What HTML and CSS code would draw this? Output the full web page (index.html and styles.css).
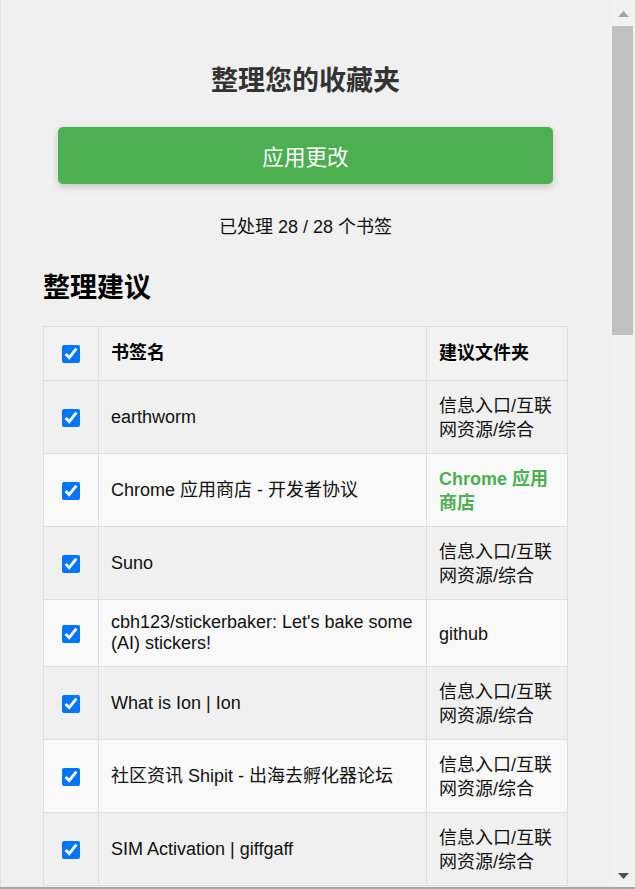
FILE: index.html
```html
<!DOCTYPE html>
<html lang="zh-CN">
<head>
<meta charset="utf-8">
<title>整理您的收藏夹</title>
<link rel="stylesheet" href="styles.css">
</head>
<body>
<div class="window">
  <main class="content">
    <h1 class="title">整理您的收藏夹</h1>
    <button class="apply-btn" type="button">应用更改</button>
    <p class="status">已处理 28 / 28 个书签</p>
    <h2 class="section-title">整理建议</h2>
    <table class="suggestions">
      <colgroup>
        <col class="col-check">
        <col class="col-name">
        <col class="col-folder">
      </colgroup>
      <thead>
        <tr>
          <th class="cell-check"><input type="checkbox" class="check" checked></th>
          <th>书签名</th>
          <th>建议文件夹</th>
        </tr>
      </thead>
      <tbody>
        <tr>
          <td class="cell-check"><input type="checkbox" class="check" checked></td>
          <td class="name">earthworm</td>
          <td class="folder">信息入口/互联网资源/综合</td>
        </tr>
        <tr>
          <td class="cell-check"><input type="checkbox" class="check" checked></td>
          <td class="name">Chrome 应用商店 - 开发者协议</td>
          <td class="folder folder-new">Chrome 应用商店</td>
        </tr>
        <tr>
          <td class="cell-check"><input type="checkbox" class="check" checked></td>
          <td class="name">Suno</td>
          <td class="folder">信息入口/互联网资源/综合</td>
        </tr>
        <tr>
          <td class="cell-check"><input type="checkbox" class="check" checked></td>
          <td class="name">cbh123/stickerbaker: Let's bake some (AI) stickers!</td>
          <td class="folder">github</td>
        </tr>
        <tr>
          <td class="cell-check"><input type="checkbox" class="check" checked></td>
          <td class="name">What is Ion | Ion</td>
          <td class="folder">信息入口/互联网资源/综合</td>
        </tr>
        <tr>
          <td class="cell-check"><input type="checkbox" class="check" checked></td>
          <td class="name">社区资讯 Shipit - 出海去孵化器论坛</td>
          <td class="folder">信息入口/互联网资源/综合</td>
        </tr>
        <tr>
          <td class="cell-check"><input type="checkbox" class="check" checked></td>
          <td class="name">SIM Activation | giffgaff</td>
          <td class="folder">信息入口/互联网资源/综合</td>
        </tr>
      </tbody>
    </table>
  </main>
  <aside class="scrollbar" aria-hidden="true">
    <div class="sb-btn sb-up">
      <svg width="11" height="6" viewBox="0 0 11 6"><polygon points="5.5,0 11,6 0,6" fill="#a3a3a3"/></svg>
    </div>
    <div class="sb-track"><div class="sb-thumb"></div></div>
    <div class="sb-btn sb-down">
      <svg width="11" height="6" viewBox="0 0 11 6"><polygon points="0,0 11,0 5.5,6" fill="#505050"/></svg>
    </div>
  </aside>
</div>
<div class="bottom-bar"></div>
</body>
</html>
```

FILE: styles.css
```css
html, body {
  margin: 0;
  padding: 0;
}

body {
  height: 889px;
  overflow: hidden;
  display: flex;
  flex-direction: column;
  background: #f0f0f0;
  font-family: "Liberation Sans", "Noto Sans CJK SC", Arial, sans-serif;
  font-size: 18px;
  color: #222;
}

.window {
  height: 887px;
  display: flex;
  border-left: 1px solid #e2e2e2;
}

.content {
  flex: 1;
  min-width: 0;
  overflow: hidden;
  padding: 63px 42px 0 42px;
}

.title {
  margin: 0;
  font-size: 27px;
  line-height: 36px;
  font-weight: bold;
  color: #333;
  text-align: center;
}

.apply-btn {
  display: flex;
  align-items: center;
  justify-content: center;
  width: calc(100% - 30px);
  height: 57px;
  margin: 28px 15px 0 15px;
  padding: 0;
  border: none;
  border-radius: 5px;
  background: #4caf50;
  color: #fff;
  font-family: inherit;
  font-size: 21.6px;
  box-shadow: 0 3px 7px rgba(0, 0, 0, 0.18);
}

.status {
  margin: 31px 0 0 0;
  line-height: 24px;
  text-align: center;
  color: #111;
}

.section-title {
  margin: 31px 0 0 0;
  font-size: 27px;
  line-height: 36px;
  font-weight: bold;
  color: #000;
}

.suggestions {
  margin-top: 20px;
  width: 100%;
  table-layout: fixed;
  border-collapse: collapse;
}

.col-check { width: 55px; }
.col-folder { width: 141px; }

.suggestions th,
.suggestions td {
  border: 1px solid #dddddd;
  text-align: left;
  vertical-align: middle;
  color: #111;
}

.suggestions th {
  background: #f2f2f2;
  font-weight: bold;
  padding: 14px 12px 15px 12px;
  line-height: 24px;
  color: #000;
}

.suggestions td {
  padding: 12px;
  line-height: 21px;
}

.suggestions tbody tr:nth-child(even) {
  background: #f9f9f9;
}

.suggestions .cell-check {
  text-align: center;
  padding-left: 0;
  padding-right: 0;
}

.check {
  width: 18px;
  height: 18px;
  margin: 0;
  vertical-align: middle;
  accent-color: #0075ff;
}

.suggestions td.folder {
  line-height: 24px;
  padding-top: 13px;
  padding-bottom: 11px;
}

.folder-new {
  color: #4caf50 !important;
  font-weight: bold;
}

.scrollbar {
  width: 25px;
  flex-shrink: 0;
  display: flex;
  flex-direction: column;
  background: #f1f1f1;
}

.sb-btn {
  display: flex;
  justify-content: center;
  padding-left: 1px;
}

.sb-up {
  height: 26px;
  align-items: flex-start;
  padding-top: 11px;
  box-sizing: border-box;
}

.sb-track {
  flex: 1;
  padding: 0 2px 0 2px;
}

.sb-thumb {
  height: 309px;
  background: #c1c1c1;
}

.sb-down {
  height: 20px;
  align-items: flex-start;
  padding-top: 6px;
  box-sizing: border-box;
}

.bottom-bar {
  height: 2px;
  background: #a6a6a6;
}
```
